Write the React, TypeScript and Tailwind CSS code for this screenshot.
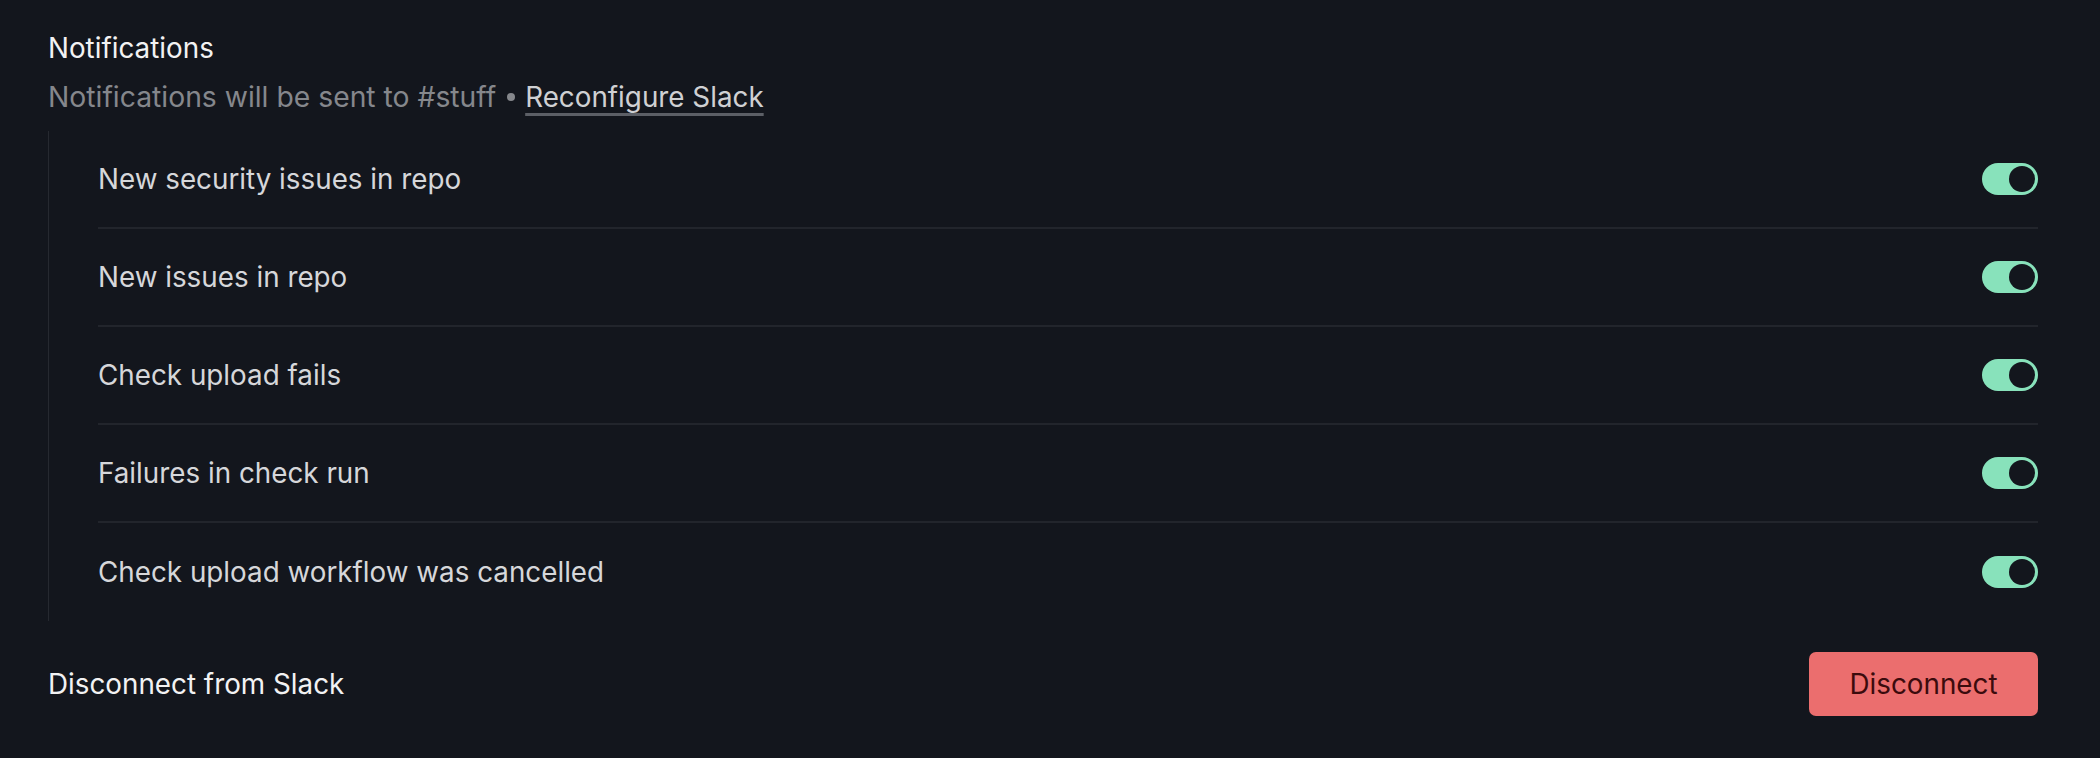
import React, { useState } from 'react';

const rows = [
  'New security issues in repo',
  'New issues in repo',
  'Check upload fails',
  'Failures in check run',
  'Check upload workflow was cancelled',
];

function Toggle({ on, onClick }: { on: boolean; onClick: () => void }) {
  return (
    <button
      type="button"
      onClick={onClick}
      className={`flex h-[32px] w-[56px] items-center rounded-full px-[3px] ${on ? 'justify-end bg-[#88e2bb]' : 'justify-start bg-[#3a3d45]'}`}
    >
      <span className="block h-[26px] w-[26px] rounded-full bg-[#13161d]" />
    </button>
  );
}

export default function App() {
  const [state, setState] = useState(rows.map(() => true));

  return (
    <div
      className="min-h-[758px] w-full bg-[#13161d] pl-[48px] pr-[62px] pt-[30px] text-[27.8px] leading-[36px]"
      style={{ fontFamily: 'Inter, "Noto Sans", sans-serif' }}
    >
      <div className="text-[#f2f2f3]">Notifications</div>
      <div className="mt-[13px] flex items-center text-[#85878c]">
        <span className="text-[28.3px]">Notifications will be sent to #stuff</span>
        <span className="ml-[11px] mr-[10px] block h-[8px] w-[8px] rounded-full bg-[#85878c]" />
        <a href="#" className="text-[#cfd0d3] underline decoration-[#5c5f66] decoration-[3px] underline-offset-[6px]">
          Reconfigure Slack
        </a>
      </div>

      <div className="mt-[16px] border-l border-[#262930] pl-[49px]">
        {rows.map((label, i) => (
          <div
            key={label}
            className={`flex h-[98px] items-center justify-between ${i < rows.length - 1 ? 'border-b-2 border-[#22252c]' : 'h-[96px]'}`}
          >
            <span className="text-[#d6d7da]">{label}</span>
            <Toggle
              on={state[i]}
              onClick={() => setState(s => s.map((v, j) => (j === i ? !v : v)))}
            />
          </div>
        ))}
      </div>

      <div className="mt-[31px] flex items-center justify-between">
        <span className="text-[#f2f2f3]">Disconnect from Slack</span>
        <button
          type="button"
          className="h-[64px] w-[229px] rounded-[7px] bg-[#eb6e6e] text-[#3b0b0d]"
        >
          Disconnect
        </button>
      </div>
    </div>
  );
}
